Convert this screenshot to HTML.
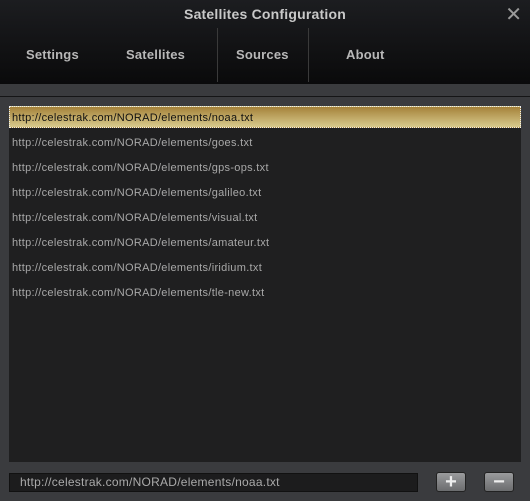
<!DOCTYPE html><html><head><style>
body{margin:0;width:530px;height:501px;overflow:hidden;background:#3a3b3e;font-family:"Liberation Sans",sans-serif;position:relative}
.hdr{position:absolute;left:0;top:0;width:530px;height:84px;background:linear-gradient(#1c1d20,#0a0a0b)}
.title{position:absolute;top:6px;left:0;width:530px;text-align:center;color:#c8c8c8;font-weight:bold;font-size:14px;letter-spacing:.2px}
.x{position:absolute;right:8px;top:2px;color:#9a9a9a;font-size:20px}
.tab{position:absolute;top:47px;color:#b8b8b8;font-weight:bold;font-size:13px;letter-spacing:.2px}
.sep{position:absolute;top:28px;width:1px;height:54px;background:#3a3a3a}
.line{position:absolute;left:0;top:96px;width:530px;height:1px;background:#151516}
.list{position:absolute;left:9px;top:106px;width:512px;height:356px;background:#1f1f20}
.row{position:absolute;left:3px;font-size:11px;color:#a8a8a8;letter-spacing:.3px}
.sel{position:absolute;left:0;top:0;width:512px;height:22px;background:linear-gradient(#a5823a,#d8ca8c);box-sizing:border-box;border:1px dotted #eee}
.inp{position:absolute;left:9px;top:473px;width:409px;background:#1c1c1d;border:1px solid #111;color:#aaa;font-size:12px;box-sizing:border-box;padding:1px 0 0 10px;height:19px;letter-spacing:.25px}
.btn{position:absolute;top:472px;width:30px;height:20px;border-radius:3px;background:linear-gradient(#9a9b9d,#6b6c6e);border:1px solid #222;box-sizing:border-box;color:#eee;font-weight:bold;font-size:20px;text-align:center;line-height:18px}
</style></head><body>
<div class="hdr"></div>
<div class="title">Satellites Configuration</div>
<div class="x">✕</div>
<div class="tab" style="left:26px">Settings</div>
<div class="tab" style="left:126px">Satellites</div>
<div class="sep" style="left:217px"></div>
<div class="tab" style="left:236px">Sources</div>
<div class="sep" style="left:308px"></div>
<div class="tab" style="left:346px">About</div>
<div class="line"></div>
<div class="list">
<div class="sel"></div>
<div class="row" style="top:6px;color:#111">http://celestrak.com/NORAD/elements/noaa.txt</div>
<div class="row" style="top:31px">http://celestrak.com/NORAD/elements/goes.txt</div>
<div class="row" style="top:56px">http://celestrak.com/NORAD/elements/gps-ops.txt</div>
<div class="row" style="top:81px">http://celestrak.com/NORAD/elements/galileo.txt</div>
<div class="row" style="top:106px">http://celestrak.com/NORAD/elements/visual.txt</div>
<div class="row" style="top:131px">http://celestrak.com/NORAD/elements/amateur.txt</div>
<div class="row" style="top:156px">http://celestrak.com/NORAD/elements/iridium.txt</div>
<div class="row" style="top:181px">http://celestrak.com/NORAD/elements/tle-new.txt</div>
</div>
<div class="inp">http://celestrak.com/NORAD/elements/noaa.txt</div>
<div class="btn" style="left:436px">+</div>
<div class="btn" style="left:484px">−</div>
</body></html>
